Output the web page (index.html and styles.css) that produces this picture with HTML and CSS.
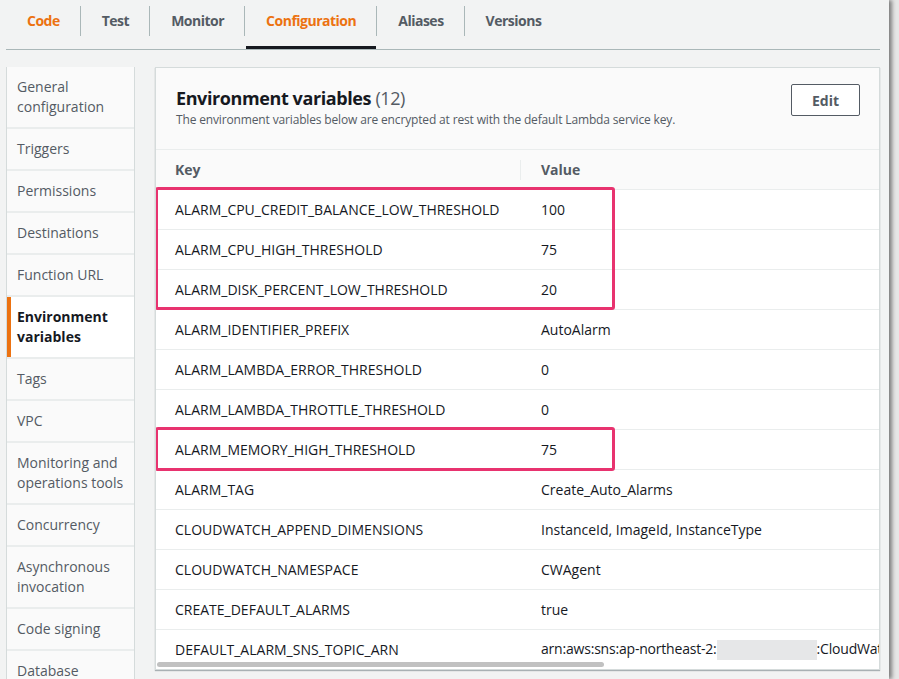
FILE: index.html
```html
<!DOCTYPE html>
<html>
<head>
<meta charset="utf-8">
<link rel="stylesheet" href="styles.css">
</head>
<body>
<div class="page">
  <nav class="tabs">
    <div class="tab tab-orange">Code</div>
    <div class="tab">Test</div>
    <div class="tab">Monitor</div>
    <div class="tab tab-orange tab-active">Configuration</div>
    <div class="tab">Aliases</div>
    <div class="tab">Versions</div>
  </nav>
  <div class="content">
    <aside class="sidebar">
      <div class="side-item two">General<br>configuration</div>
      <div class="side-item">Triggers</div>
      <div class="side-item">Permissions</div>
      <div class="side-item">Destinations</div>
      <div class="side-item">Function URL</div>
      <div class="side-item two active">Environment<br>variables</div>
      <div class="side-item">Tags</div>
      <div class="side-item">VPC</div>
      <div class="side-item two">Monitoring and<br>operations tools</div>
      <div class="side-item">Concurrency</div>
      <div class="side-item two">Asynchronous<br>invocation</div>
      <div class="side-item">Code signing</div>
      <div class="side-item">Database</div>
    </aside>
    <section class="panel">
      <header class="panel-head">
        <div>
          <h2 class="title">Environment variables <span class="count">(12)</span></h2>
          <p class="desc">The environment variables below are encrypted at rest with the default Lambda service key.</p>
        </div>
        <button class="btn">Edit</button>
      </header>
      <div class="table">
        <div class="row thead"><div class="k">Key</div><div class="v">Value</div></div>
        <div class="group">
          <div class="row"><div class="k">ALARM_CPU_CREDIT_BALANCE_LOW_THRESHOLD</div><div class="v">100</div></div>
          <div class="row"><div class="k">ALARM_CPU_HIGH_THRESHOLD</div><div class="v">75</div></div>
          <div class="row"><div class="k">ALARM_DISK_PERCENT_LOW_THRESHOLD</div><div class="v">20</div></div>
          <div class="hl hl-3"></div>
        </div>
        <div class="row"><div class="k">ALARM_IDENTIFIER_PREFIX</div><div class="v">AutoAlarm</div></div>
        <div class="row"><div class="k">ALARM_LAMBDA_ERROR_THRESHOLD</div><div class="v">0</div></div>
        <div class="row"><div class="k">ALARM_LAMBDA_THROTTLE_THRESHOLD</div><div class="v">0</div></div>
        <div class="group">
          <div class="row"><div class="k">ALARM_MEMORY_HIGH_THRESHOLD</div><div class="v">75</div></div>
          <div class="hl hl-1"></div>
        </div>
        <div class="row"><div class="k">ALARM_TAG</div><div class="v">Create_Auto_Alarms</div></div>
        <div class="row"><div class="k">CLOUDWATCH_APPEND_DIMENSIONS</div><div class="v">InstanceId, ImageId, InstanceType</div></div>
        <div class="row"><div class="k">CLOUDWATCH_NAMESPACE</div><div class="v">CWAgent</div></div>
        <div class="row"><div class="k">CREATE_DEFAULT_ALARMS</div><div class="v">true</div></div>
        <div class="row"><div class="k">DEFAULT_ALARM_SNS_TOPIC_ARN</div><div class="v arn">arn:aws:sns:ap-northeast-2:<span class="mask"></span>:CloudWat</div></div>
      </div>
      <div class="scrollbar"><div class="thumb"></div></div>
    </section>
  </div>
</div>
</body>
</html>
```
FILE: styles.css
```css
* { box-sizing: border-box; }
html, body { margin: 0; padding: 0; height: 100%; overflow: hidden; }
body {
  background: #e6e6e6;
  font-family: "Open Sans", "Noto Sans", sans-serif;
  color: #16191f;
}
.page {
  width: 889px;
  height: 679px;
  background: #f2f3f3;
  box-shadow: 3px 0 4px rgba(0,0,0,0.45);
  overflow: hidden;
}
.tabs {
  display: flex;
  margin: 0 9px 0 6px;
  height: 50px;
  border-bottom: 1px solid #aab7b8;
  padding-top: 6px;
}
.tab {
  font-size: 14px;
  font-weight: 700;
  letter-spacing: -0.5px;
  color: #545b64;
  padding: 0 20px 0 21px;
  height: 30px;
  line-height: 30px;
  border-left: 1px solid #aab7b8;
  position: relative;
}
.tab:first-child { border-left: none; }
.tab-orange { color: #ec7211; }
.tab-active::after {
  content: "";
  position: absolute;
  left: 1px; right: 0;
  top: 40px;
  height: 3px;
  background: #16191f;
}
.content {
  display: flex;
  gap: 20px;
  padding: 17px 9px 0 6px;
}
.sidebar {
  width: 129px;
  flex: none;
  background: #eaeded;
  border-left: 1px solid #d5dbdb;
  border-right: 1px solid #d5dbdb;
  display: flex;
  flex-direction: column;
  gap: 2px;
}
.side-item {
  background: #fafafa;
  height: 40px;
  padding: 0 10px;
  font-size: 14px;
  line-height: 20px;
  color: #545b64;
  display: flex;
  align-items: center;
}
.side-item.two { height: 60px; }
.side-item.active {
  background: #ffffff;
  color: #16191f;
  font-weight: 700;
  border-left: 4px solid #ec7211;
  padding-left: 6px;
}
.panel {
  flex: 1;
  height: 603px;
  background: #ffffff;
  border: 1px solid #d5dbdb;
  box-shadow: 0 1px 1px rgba(0,28,36,0.3);
  position: relative;
  overflow: hidden;
}
.panel-head {
  background: #fafafa;
  height: 82px;
  border-bottom: 1px solid #eaeded;
  display: flex;
  justify-content: space-between;
  align-items: flex-start;
  padding: 16px 20px 0 20px;
}
.title {
  margin: 3px 0 0 0;
  font-size: 18px;
  line-height: 22px;
  font-weight: 700;
  color: #16191f;
  letter-spacing: -0.4px;
}
.count { font-weight: 400; color: #545b64; }
.desc {
  margin: 3px 0 0 0;
  font-size: 12px;
  line-height: 16px;
  letter-spacing: -0.15px;
  color: #545b64;
}
.btn {
  width: 69px;
  height: 32px;
  background: #ffffff;
  border: 1px solid #545b64;
  border-radius: 2px;
  font-family: inherit;
  font-size: 14px;
  font-weight: 700;
  color: #545b64;
  margin-right: -1px;
}
.table { display: flex; flex-direction: column; }
.row {
  display: flex;
  height: 40px;
  align-items: center;
  border-bottom: 1px solid #eaeded;
  font-size: 14px;
  color: #16191f;
}
.row .k { width: 365px; padding-left: 19px; flex: none; white-space: nowrap; }
.row .v { padding-left: 20px; white-space: nowrap; }
.thead {
  background: #fafafa;
  font-weight: 700;
  color: #545b64;
}
.thead .k { border-right: 1px solid #eaeded; height: 20px; line-height: 20px; }
.group { position: relative; display: flex; flex-direction: column; }
.hl {
  position: absolute;
  left: -1px;
  width: 460px;
  border: 3px solid #e8336f;
  border-radius: 3px;
}
.hl-3 { top: -3px; height: 123px; }
.hl-1 { top: -3px; height: 44px; }
.arn { letter-spacing: -0.2px; }
.mask {
  display: inline-block;
  width: 100px;
  height: 20px;
  background: #e6e7e8;
  vertical-align: middle;
}
.scrollbar {
  position: absolute;
  left: 0; right: 0; bottom: 0;
  height: 9px;
  background: #fff;
  z-index: 2;
}
.thumb {
  position: absolute;
  left: 1px; top: 2px;
  width: 447px;
  height: 5px;
  border-radius: 3px;
  background: #c1c1c1;
}
```
